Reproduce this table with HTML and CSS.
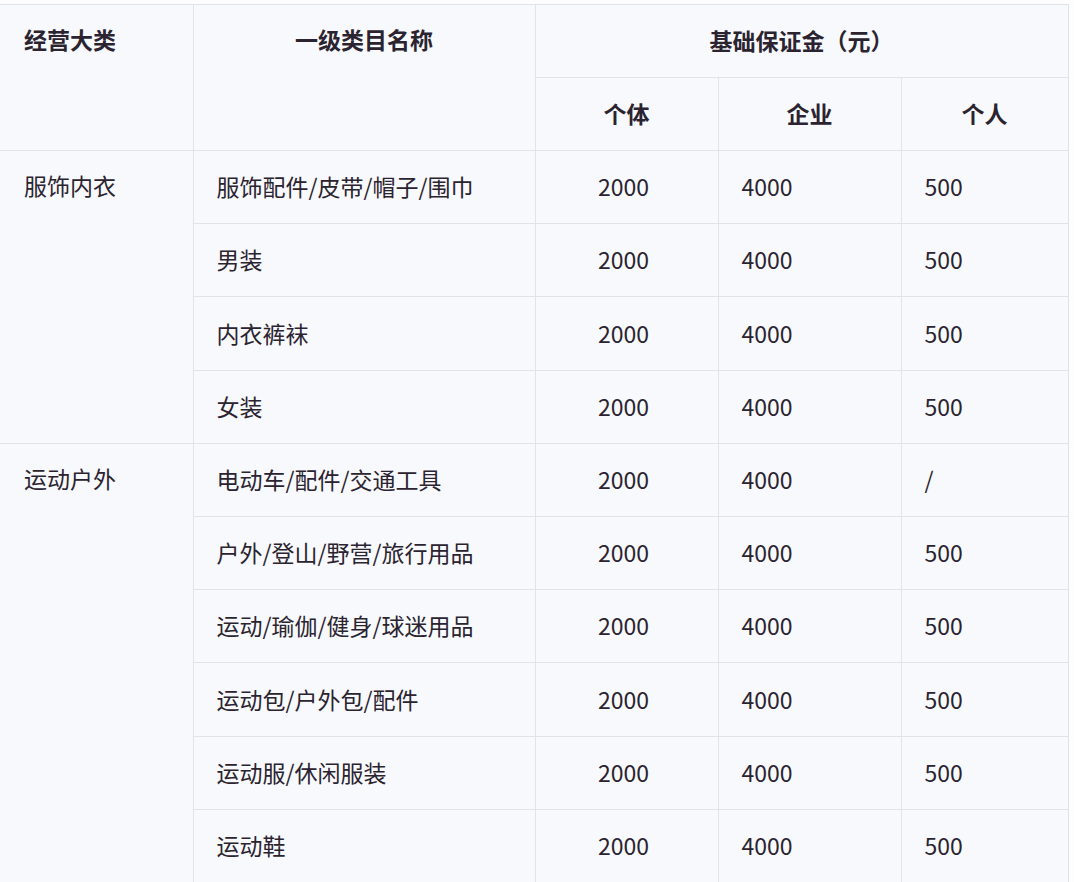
FILE: index.html
```html
<!DOCTYPE html>
<html lang="zh-CN">
<head>
<meta charset="utf-8">
<title>保证金表</title>
<link rel="stylesheet" href="styles.css">
</head>
<body>
<table class="fee-table">
  <colgroup>
    <col class="c-cat">
    <col class="c-name">
    <col class="c-num">
    <col class="c-num">
    <col class="c-last">
  </colgroup>
  <thead>
    <tr>
      <th rowspan="2" class="th-left">经营大类</th>
      <th rowspan="2" class="th-top">一级类目名称</th>
      <th colspan="3">基础保证金（元）</th>
    </tr>
    <tr>
      <th>个体</th>
      <th>企业</th>
      <th>个人</th>
    </tr>
  </thead>
  <tbody>
    <tr class="group-start">
      <td rowspan="4" class="cat">服饰内衣</td>
      <td>服饰配件/皮带/帽子/围巾</td>
      <td class="mid">2000</td><td>4000</td><td>500</td>
    </tr>
    <tr><td>男装</td><td class="mid">2000</td><td>4000</td><td>500</td></tr>
    <tr><td>内衣裤袜</td><td class="mid">2000</td><td>4000</td><td>500</td></tr>
    <tr><td>女装</td><td class="mid">2000</td><td>4000</td><td>500</td></tr>
    <tr class="group-start">
      <td rowspan="6" class="cat">运动户外</td>
      <td>电动车/配件/交通工具</td>
      <td class="mid">2000</td><td>4000</td><td>/</td>
    </tr>
    <tr><td>户外/登山/野营/旅行用品</td><td class="mid">2000</td><td>4000</td><td>500</td></tr>
    <tr><td>运动/瑜伽/健身/球迷用品</td><td class="mid">2000</td><td>4000</td><td>500</td></tr>
    <tr><td>运动包/户外包/配件</td><td class="mid">2000</td><td>4000</td><td>500</td></tr>
    <tr><td>运动服/休闲服装</td><td class="mid">2000</td><td>4000</td><td>500</td></tr>
    <tr><td>运动鞋</td><td class="mid">2000</td><td>4000</td><td>500</td></tr>
  </tbody>
</table>
</body>
</html>
```

FILE: styles.css
```css
html, body {
  margin: 0;
  padding: 0;
  background: #fdfdfe;
}

body {
  padding-top: 4px;
  font-family: "Noto Sans CJK SC", "Noto Sans", sans-serif;
  color: #2b2430;
}

.fee-table {
  border-collapse: collapse;
  table-layout: fixed;
  width: 1068px;
  background: #f8f9fc;
  font-size: 23px;
}

.c-cat { width: 193px; }
.c-name { width: 342px; }
.c-num { width: 183px; }
.c-last { width: 167px; }

.fee-table th,
.fee-table td {
  border: 1px solid #dfe4ea;
  height: 72px;
  padding: 0 0 0 23px;
  text-align: left;
  vertical-align: middle;
  font-weight: 400;
  line-height: 1.2;
  white-space: nowrap;
}

.fee-table tbody td {
  height: 72.2px;
}

.fee-table tr > :first-child { border-left: none; }

.fee-table th {
  font-weight: 700;
  text-align: center;
  padding: 0;
}

.fee-table th.th-left {
  text-align: left;
  padding: 21px 0 0 24px;
  vertical-align: top;
}

.fee-table th.th-top {
  vertical-align: top;
  padding-top: 21px;
}

.fee-table td.cat {
  vertical-align: top;
  padding-top: 21px;
  padding-left: 24px;
}

.fee-table td.mid {
  text-align: center;
  padding: 0 6px 0 0;
}
```
